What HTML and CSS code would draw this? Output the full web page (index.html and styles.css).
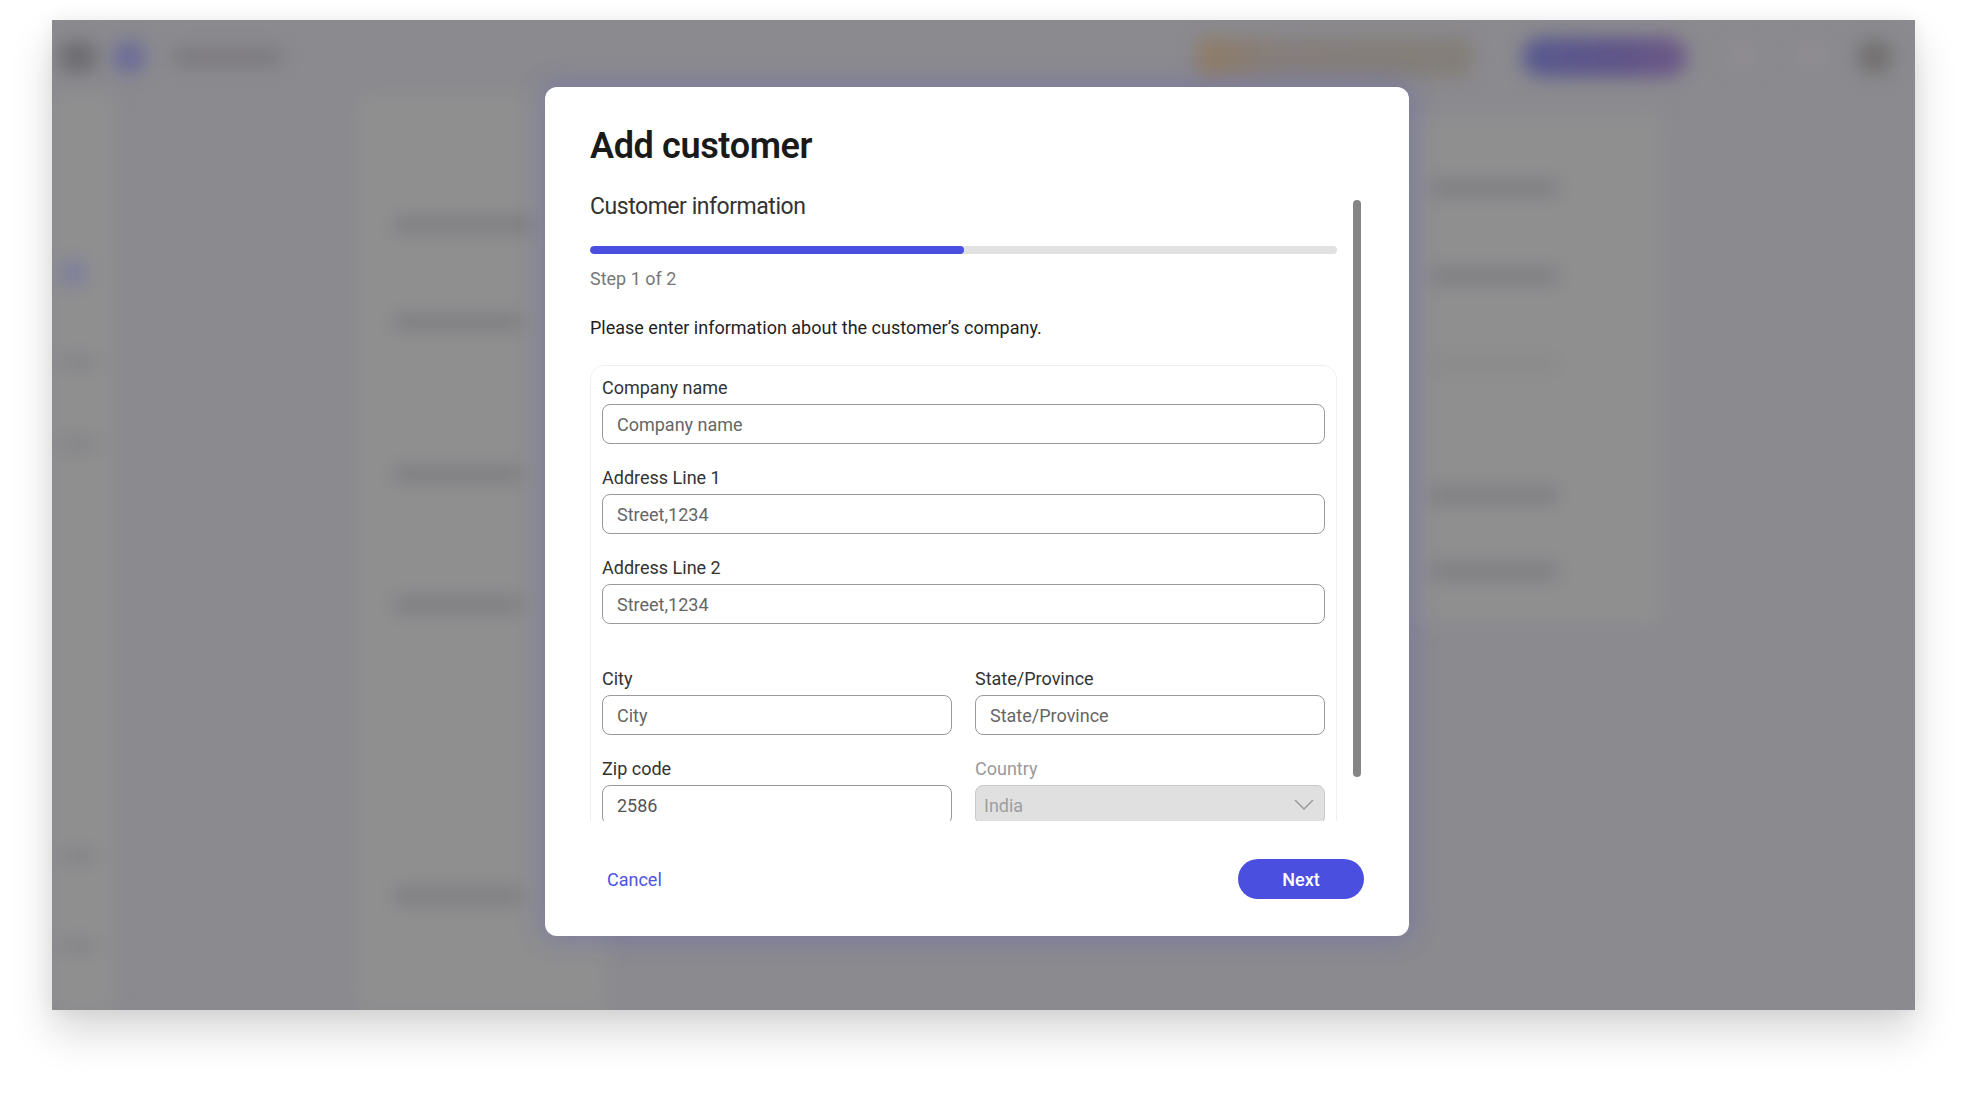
FILE: index.html
```html
<!DOCTYPE html>
<html lang="en">
<head>
<meta charset="utf-8">
<title>Add customer</title>
<link rel="stylesheet" href="styles.css">
</head>
<body>
<div class="page">
  <div class="frame">
    <div class="app" aria-hidden="true">
      <div class="topbar">
        <div class="tb-left">
          <span class="blob blob-dark"></span>
          <span class="blob blob-avatar"></span>
          <span class="blob blob-title"></span>
        </div>
        <div class="tb-right">
          <span class="blob blob-banner"></span>
          <span class="blob blob-cta"></span>
          <span class="blob blob-icon"></span>
          <span class="blob blob-icon"></span>
          <span class="blob blob-user"></span>
        </div>
      </div>
      <div class="app-body">
        <div class="sidebar">
          <span class="sb-item sb-active"></span>
          <span class="sb-item sb-2"></span>
          <span class="sb-item sb-3"></span>
          <span class="sb-item sb-4"></span>
          <span class="sb-item sb-5"></span>
        </div>
        <div class="col-left">
          <span class="bar bar-l1"></span>
          <span class="bar bar-l2"></span>
          <span class="bar bar-l3"></span>
          <span class="bar bar-l4"></span>
          <span class="bar bar-l5"></span>
        </div>
        <div class="col-mid"></div>
        <div class="col-right">
          <span class="bar bar-r1"></span>
          <span class="bar bar-r2"></span>
          <span class="bar bar-r3 bar-faint"></span>
          <span class="bar bar-r4"></span>
          <span class="bar bar-r5"></span>
        </div>
      </div>
    </div>

    <div class="overlay">
      <div class="modal" role="dialog" aria-labelledby="dlg-title">
        <h1 class="modal-title" id="dlg-title">Add customer</h1>
        <div class="scroll-row">
          <div class="scroll-view">
            <h2 class="section-title">Customer information</h2>
            <div class="progress"><div class="progress-fill" style="width: 50%"></div></div>
            <p class="step">Step 1 of 2</p>
            <p class="intro">Please enter information about the customer’s company.</p>
            <div class="form-card">
              <label class="field">
                <span class="field-label">Company name</span>
                <input class="field-input" type="text" placeholder="Company name">
              </label>
              <label class="field">
                <span class="field-label">Address Line 1</span>
                <input class="field-input" type="text" placeholder="Street,1234">
              </label>
              <label class="field">
                <span class="field-label">Address Line 2</span>
                <input class="field-input" type="text" placeholder="Street,1234">
              </label>
              <div class="field-grid">
                <label class="field">
                  <span class="field-label">City</span>
                  <input class="field-input" type="text" placeholder="City">
                </label>
                <label class="field">
                  <span class="field-label">State/Province</span>
                  <input class="field-input" type="text" placeholder="State/Province">
                </label>
                <label class="field">
                  <span class="field-label">Zip code</span>
                  <input class="field-input" type="text" value="2586">
                </label>
                <div class="field field-disabled">
                  <span class="field-label">Country</span>
                  <div class="select">
                    <span>India</span>
                    <svg class="chevron" width="20" height="12" viewBox="0 0 20 12"><path d="M1.5 1.5 L10 10 L18.5 1.5" fill="none" stroke="#9a9a9a" stroke-width="1.5" stroke-linecap="round" stroke-linejoin="round"/></svg>
                  </div>
                </div>
              </div>
            </div>
          </div>
          <div class="scroll-track"><div class="scroll-thumb"></div></div>
        </div>
        <div class="modal-footer">
          <button class="btn-text" type="button">Cancel</button>
          <button class="btn-primary" type="button">Next</button>
        </div>
      </div>
    </div>
  </div>
</div>
</body>
</html>
```

FILE: styles.css
```css
* { box-sizing: border-box; }

html, body {
  margin: 0;
  padding: 0;
  background: #ffffff;
}

body {
  font-family: Roboto, "Liberation Sans", Arial, sans-serif;
  color: #1f1f1f;
}

.page {
  padding: 20px 52px 0 52px;
  height: 1095px;
  overflow: hidden;
}

.frame {
  display: grid;
  width: 1863px;
  height: 990px;
  overflow: hidden;
  background: #8b8a8f;
  box-shadow: 0 22px 40px rgba(0, 0, 0, 0.16), 0 0 18px rgba(0, 0, 0, 0.06);
}

.app, .overlay {
  grid-area: 1 / 1;
}

/* ---------- blurred background app ---------- */
.app {
  display: flex;
  flex-direction: column;
  filter: blur(9px);
}

.topbar {
  height: 74px;
  display: flex;
  align-items: center;
  justify-content: space-between;
  padding: 0 22px 0 8px;
}

.tb-left, .tb-right {
  display: flex;
  align-items: center;
}

.blob { display: block; border-radius: 999px; }
.blob-dark { width: 36px; height: 30px; background: #6d6c70; border-radius: 8px; }
.blob-avatar { width: 34px; height: 34px; background: #6c6d98; margin-left: 16px; }
.blob-title { width: 110px; height: 16px; background: #79787d; margin-left: 26px; }
.blob-banner {
  width: 275px; height: 40px;
  background: linear-gradient(90deg, #907c66 0%, #857e7c 30%, #837e78 100%);
  border-radius: 10px;
}
.blob-cta {
  width: 165px; height: 40px;
  background: linear-gradient(90deg, #585a90 0%, #5f5488 60%, #6e5a88 100%);
  margin-left: 50px;
}
.blob-icon { width: 30px; height: 30px; background: #8f8d91; margin-left: 40px; }
.blob-user { width: 36px; height: 36px; background: #737170; margin-left: 30px; }

.app-body {
  flex: 1;
  display: flex;
  align-items: flex-start;
}

.sidebar {
  width: 62px;
  align-self: stretch;
  background: #8f8f90;
  display: flex;
  flex-direction: column;
  padding: 0 8px;
}
.sb-item { display: block; height: 12px; width: 36px; background: #818085; border-radius: 6px; }
.sb-active { background: #7e7e9c; height: 26px; width: 26px; margin-top: 166px; }
.sb-2 { margin-top: 70px; }
.sb-3 { margin-top: 70px; }
.sb-4 { margin-top: 400px; }
.sb-5 { margin-top: 78px; }

.col-left {
  margin-left: 243px;
  width: 250px;
  align-self: stretch;
  background: #8f8f90;
  display: flex;
  flex-direction: column;
  padding: 0 36px;
}
.bar { display: block; height: 16px; width: 130px; background: #7d7c80; border-radius: 8px; }
.bar-l1 { margin-top: 123px; width: 140px; }
.bar-l2 { margin-top: 81px; }
.bar-l3 { margin-top: 136px; }
.bar-l4 { margin-top: 115px; }
.bar-l5 { margin-top: 275px; }
.bar-faint { background: #8a8a8b; }

.col-mid { width: 802px; }

.col-right {
  width: 253px;
  height: 510px;
  margin-top: 20px;
  background: #8f8f90;
  display: flex;
  flex-direction: column;
  padding: 0 20px;
}
.bar-r1 { margin-top: 66px; }
.bar-r2 { margin-top: 72px; }
.bar-r3 { margin-top: 72px; }
.bar-r4 { margin-top: 115px; }
.bar-r5 { margin-top: 60px; }

/* ---------- overlay + modal ---------- */
.overlay {
  position: relative;
  z-index: 1;
  display: flex;
  align-items: flex-start;
  justify-content: flex-start;
  padding: 67px 0 0 493px;
}

.modal {
  width: 864px;
  height: 849px;
  background: #ffffff;
  border-radius: 12px;
  padding: 37px 45px 37px 45px;
  display: flex;
  flex-direction: column;
  box-shadow: 0 0 26px 4px rgba(80, 80, 200, 0.28);
}

.modal-title {
  margin: 0;
  font-size: 36px;
  line-height: 44px;
  font-weight: 600;
  color: #1a1a1a;
  letter-spacing: -0.01em;
}

.scroll-row {
  margin-top: 24px;
  height: 629px;
  display: flex;
  gap: 16px;
}

.scroll-view {
  width: 747px;
  height: 629px;
  overflow: hidden;
  display: flex;
  flex-direction: column;
}

.scroll-track {
  width: 8px;
  padding-top: 8px;
}
.scroll-thumb {
  width: 8px;
  height: 577px;
  background: #858585;
  border-radius: 4px;
}

.section-title {
  margin: 0;
  font-size: 23px;
  line-height: 30px;
  font-weight: 400;
  color: #333333;
  letter-spacing: -0.02em;
}

.progress {
  margin-top: 24px;
  height: 8px;
  border-radius: 4px;
  background: #e1e1e1;
  overflow: hidden;
  flex-shrink: 0;
}
.progress-fill {
  height: 100%;
  background: #4b4fe0;
  border-radius: 4px;
}

.step {
  margin: 14px 0 0 0;
  font-size: 18px;
  line-height: 22px;
  color: #777777;
}

.intro {
  margin: 27px 0 0 0;
  font-size: 18px;
  line-height: 22px;
  color: #1f1f1f;
}

.form-card {
  margin-top: 26px;
  flex-shrink: 0;
  border: 1px solid #efefef;
  border-radius: 14px;
  padding: 11px 11px 24px 11px;
  display: flex;
  flex-direction: column;
  gap: 23px;
}

.field {
  display: flex;
  flex-direction: column;
  gap: 5px;
}

.field-label {
  font-size: 18px;
  line-height: 22px;
  color: #333333;
}

.field-input {
  height: 40px;
  width: 100%;
  border: 1.5px solid #9a9a9a;
  border-radius: 8px;
  padding: 0 14px;
  font-family: Roboto, "Liberation Sans", Arial, sans-serif;
  font-size: 18px;
  color: #555555;
  background: #ffffff;
  outline: none;
}
.field-input::placeholder { color: #666666; opacity: 1; }

.field-grid {
  margin-top: 21px;
  display: grid;
  grid-template-columns: 1fr 1fr;
  column-gap: 23px;
  row-gap: 23px;
}

.field-disabled .field-label { color: #9a9a9a; }

.select {
  height: 40px;
  border: 1.5px solid #c9c9c9;
  border-radius: 8px;
  background: #e0e0e0;
  padding: 0 10px 0 8px;
  display: flex;
  align-items: center;
  justify-content: space-between;
  font-size: 18px;
  color: #9e9e9e;
}

.chevron { display: block; }

.modal-footer {
  margin-top: 38px;
  display: flex;
  align-items: center;
  justify-content: space-between;
}

.btn-text {
  border: 0;
  background: transparent;
  padding: 0 17px;
  height: 40px;
  font-family: Roboto, "Liberation Sans", Arial, sans-serif;
  font-size: 18px;
  color: #4f52e6;
  cursor: pointer;
}

.btn-primary {
  width: 126px;
  height: 40px;
  border: 0;
  border-radius: 20px;
  background: #4b4fe0;
  color: #ffffff;
  font-family: Roboto, "Liberation Sans", Arial, sans-serif;
  font-size: 18px;
  font-weight: 500;
  cursor: pointer;
}
```
